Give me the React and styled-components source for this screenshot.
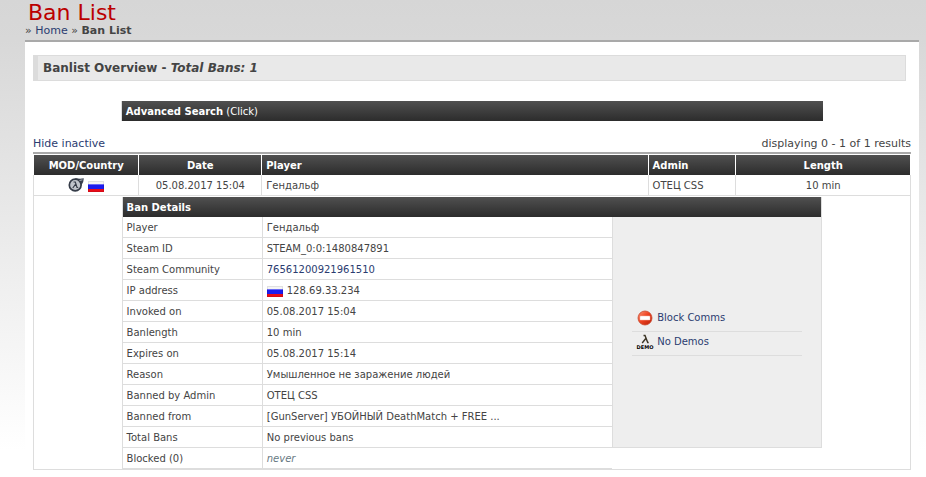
import styled, { createGlobalStyle } from 'styled-components';

const details = [
  { label: 'Player', value: 'Гендальф' },
  { label: 'Steam ID', value: 'STEAM_0:0:1480847891' },
  { label: 'Steam Community', value: '76561200921961510', type: 'link' },
  { label: 'IP address', value: '128.69.33.234', type: 'ip' },
  { label: 'Invoked on', value: '05.08.2017 15:04' },
  { label: 'Banlength', value: '10 min' },
  { label: 'Expires on', value: '05.08.2017 15:14' },
  { label: 'Reason', value: 'Умышленное не заражение людей' },
  { label: 'Banned by Admin', value: 'ОТЕЦ CSS' },
  { label: 'Banned from', value: '[GunServer] УБОЙНЫЙ DeathMatch + FREE ...' },
  { label: 'Total Bans', value: 'No previous bans' },
  { label: 'Blocked (0)', value: 'never', type: 'muted' },
];

const FlagIcon = () => (
  <svg width="16" height="13" viewBox="0 0 16 13" role="img" aria-label="Russia">
    <rect y="2" width="16" height="4" fill="#f4f4f4" />
    <rect y="5" width="16" height="5" fill="#1c1cee" />
    <rect y="5" width="16" height="1" fill="#6a6af4" />
    <rect y="10" width="16" height="3" fill="#e80c18" />
    <path d="M0.500 2.500h15v10h-15z" fill="none" stroke="#000" strokeOpacity="0.08" />
  </svg>
);

const ModIcon = () => (
  <svg width="16" height="16" viewBox="0 0 16 16" role="img" aria-label="Source">
    <path d="M7 1Q12 2.200 15.800 1.200Q16 5 13 9L10 5Z" fill="#3c4350" />
    <circle cx="7.200" cy="8" r="5.900" fill="#bfc4cb" stroke="#353c48" strokeWidth="1.700" />
    <path d="M5.500 5h1.800l1.700 5.500h1.200M7.700 7L4.800 11" fill="none" stroke="#353c48" strokeWidth="1.200" />
    <path d="M11.500 3.500L14.500 2.800" stroke="#aab0ba" strokeWidth="1" />
  </svg>
);

const BlockIcon = () => (
  <svg width="16" height="16" viewBox="0 0 16 16" aria-hidden="true">
    <defs>
      <linearGradient id="block" x1="0" y1="0" x2="1" y2="1">
        <stop offset="0" stopColor="#fa9678" />
        <stop offset="0.45" stopColor="#f04422" />
        <stop offset="1" stopColor="#b81c06" />
      </linearGradient>
    </defs>
    <circle cx="8" cy="8" r="7" fill="url(#block)" stroke="#c8492f" strokeWidth="0.800" />
    <rect x="3" y="6" width="10" height="4" rx="0.500" fill="#fff" stroke="#f5b5a5" strokeWidth="0.500" />
  </svg>
);

const DemoIcon = () => (
  <svg width="16" height="16" viewBox="0 0 16 16" overflow="visible" aria-hidden="true">
    <path d="M6.500 1.500h1.500l2.700 7h1M8.800 4.500L5.200 9" fill="none" stroke="#3b3424" strokeWidth="1.400" />
    <text x="8" y="15" fontSize="5" fontWeight="bold" textAnchor="middle" fontFamily="DejaVu Sans, sans-serif" fill="#000">
      DEMO
    </text>
  </svg>
);

const DetailValue = ({ type, value }) => {
  if (type === 'link') return <a href="#community">{value}</a>;
  if (type === 'muted') return <Muted>{value}</Muted>;
  if (type === 'ip') {
    return (
      <IconText>
        <FlagIcon />
        {value}
      </IconText>
    );
  }
  return value;
};

const BanDetails = () => (
  <DetailsTable>
    <colgroup>
      <Col $width="20%" />
      <Col />
      <Col $width="30%" />
    </colgroup>
    <thead>
      <tr>
        <DarkCell colSpan={3}>Ban Details</DarkCell>
      </tr>
    </thead>
    <tbody>
      {details.map(({ label, value, type }, index) => (
        <tr key={label}>
          <DetailCell>{label}</DetailCell>
          <DetailCell>
            <DetailValue type={type} value={value} />
          </DetailCell>
          {index === 0 && (
            <ActionsCell rowSpan={details.length - 1}>
              <Actions>
                <li>
                  <a href="#comms">
                    <BlockIcon />
                    Block Comms
                  </a>
                </li>
                <li>
                  <a href="#demos">
                    <DemoIcon />
                    No Demos
                  </a>
                </li>
              </Actions>
            </ActionsCell>
          )}
        </tr>
      ))}
    </tbody>
  </DetailsTable>
);

const App = () => {
  return (
    <>
      <GlobalStyle />
      <Page>
        <Header>
          <h1>Ban List</h1>
          <Breadcrumb>
            » <a href="#home">Home</a> » <b>Ban List</b>
          </Breadcrumb>
        </Header>
        <Content>
          <Overview>
            Banlist Overview - <i>Total Bans: 1</i>
          </Overview>
          <SearchToggle type="button">
            <b>Advanced Search</b> (Click)
          </SearchToggle>
          <ListNav>
            <a href="#inactive">Hide inactive</a>
            <span>displaying 0 - 1 of 1 results</span>
          </ListNav>
          <BanTable>
            <colgroup>
              <Col $width="12%" />
              <Col $width="14%" />
              <Col />
              <Col $width="10%" />
              <Col $width="20%" />
            </colgroup>
            <thead>
              <tr>
                <HeadCell $center>MOD/Country</HeadCell>
                <HeadCell $center>Date</HeadCell>
                <HeadCell>Player</HeadCell>
                <HeadCell>Admin</HeadCell>
                <HeadCell $center>Length</HeadCell>
              </tr>
            </thead>
            <tbody>
              <tr>
                <BanCell $center>
                  <IconText>
                    <ModIcon />
                    <FlagIcon />
                  </IconText>
                </BanCell>
                <BanCell $center>05.08.2017 15:04</BanCell>
                <BanCell>Гендальф</BanCell>
                <BanCell>ОТЕЦ CSS</BanCell>
                <BanCell $center>10 min</BanCell>
              </tr>
              <tr>
                <ExpandedCell colSpan={5}>
                  <BanDetails />
                </ExpandedCell>
              </tr>
            </tbody>
          </BanTable>
        </Content>
      </Page>
    </>
  );
};

const GlobalStyle = createGlobalStyle`
  * {
    box-sizing: border-box;
  }
  body {
    margin: 0;
    background: #fff linear-gradient(#d6d6d6 0, #d8d8d8 40px, #fff 450px) no-repeat;
    color: #444;
    font-family: Verdana, 'DejaVu Sans', sans-serif;
    font-size: 11px;
  }
  a {
    color: #2b3c70;
    text-decoration: none;
  }
  svg {
    display: block;
    flex-shrink: 0;
  }
`;

const Page = styled.div`
  margin: 0 7px 0 25px;
`;

const Header = styled.header`
  border-bottom: 2px solid #a9a9a9;
  padding-bottom: 3px;
  h1 {
    margin: 0;
    padding: 1px 3px 0;
    color: #b00;
    font-size: 22px;
    font-weight: normal;
    line-height: 24px;
  }
`;

const Breadcrumb = styled.nav`
  line-height: 12px;
`;

const Content = styled.main`
  padding: 13px 8px 7px;
  background: #fff;
`;

const Overview = styled.h2`
  margin: 0 5px 20px 0;
  padding: 0 5px;
  border: 1px solid #dcdcdc;
  border-left-width: 5px;
  background: #e9e9e9;
  font-size: 12px;
  line-height: 24px;
`;

const SearchToggle = styled.button`
  display: block;
  width: 80%;
  height: 20px;
  margin: 0 auto;
  padding: 1px 4px 0;
  border: solid #ddd;
  border-width: 0 0 0 1px;
  background: linear-gradient(#505050, #2c2c2c);
  color: #fff;
  font-family: inherit;
  font-size: 10px;
  line-height: 19px;
  text-align: left;
  cursor: pointer;
`;

const ListNav = styled.div`
  display: flex;
  justify-content: space-between;
  padding-top: 14px;
  border-bottom: 2px solid #a9a9a9;
  line-height: 17px;
`;

const BanTable = styled.table`
  width: 100%;
  margin-top: 1px;
  table-layout: fixed;
  border-spacing: 0;
  font-size: 10px;
`;

const Col = styled.col`
  width: ${(props) => props.$width || 'auto'};
`;

const HeadCell = styled.th`
  height: 20px;
  padding: 0 4px;
  border-left: 1px solid #fff;
  background: linear-gradient(#505050, #2c2c2c) padding-box;
  color: #fff;
  text-align: ${(props) => (props.$center ? 'center' : 'left')};
  &:last-child {
    border-right: 1px solid #fff;
  }
`;

const BanCell = styled.td`
  height: 21px;
  padding: 0 4px;
  border: solid #ddd;
  border-width: 0 0 1px 1px;
  text-align: ${(props) => (props.$center ? 'center' : 'left')};
  &:last-child {
    border-right-width: 1px;
  }
`;

const ExpandedCell = styled.td`
  padding: 1px 0 0;
  border: solid #ddd;
  border-width: 0 1px 1px;
`;

const DetailsTable = styled.table`
  width: 80%;
  margin: 0 auto;
  table-layout: fixed;
  border-spacing: 0;
`;

const DarkCell = styled.th`
  height: 20px;
  padding: 0 4px;
  border: solid #ddd;
  border-width: 0 1px;
  background: linear-gradient(#505050, #2c2c2c) padding-box;
  color: #fff;
  text-align: left;
`;

const DetailCell = styled.td`
  height: 21px;
  padding: 0 4px;
  border: solid #ddd;
  border-width: 0 0 1px 1px;
  white-space: nowrap;
`;

const ActionsCell = styled.td`
  padding: 0 19px;
  border: solid #ddd;
  border-width: 0 1px 1px;
  background: #eee;
`;

const Actions = styled.ul`
  margin: 0;
  padding: 0;
  list-style: none;
  li {
    border-bottom: 1px solid #ddd;
  }
  a {
    display: flex;
    align-items: center;
    gap: 4px;
    height: 23px;
    padding: 0 5px 4px;
  }
`;

const IconText = styled.span`
  display: inline-flex;
  align-items: center;
  gap: 4px;
  vertical-align: middle;
`;

const Muted = styled.i`
  color: #677882;
`;

export default App;
